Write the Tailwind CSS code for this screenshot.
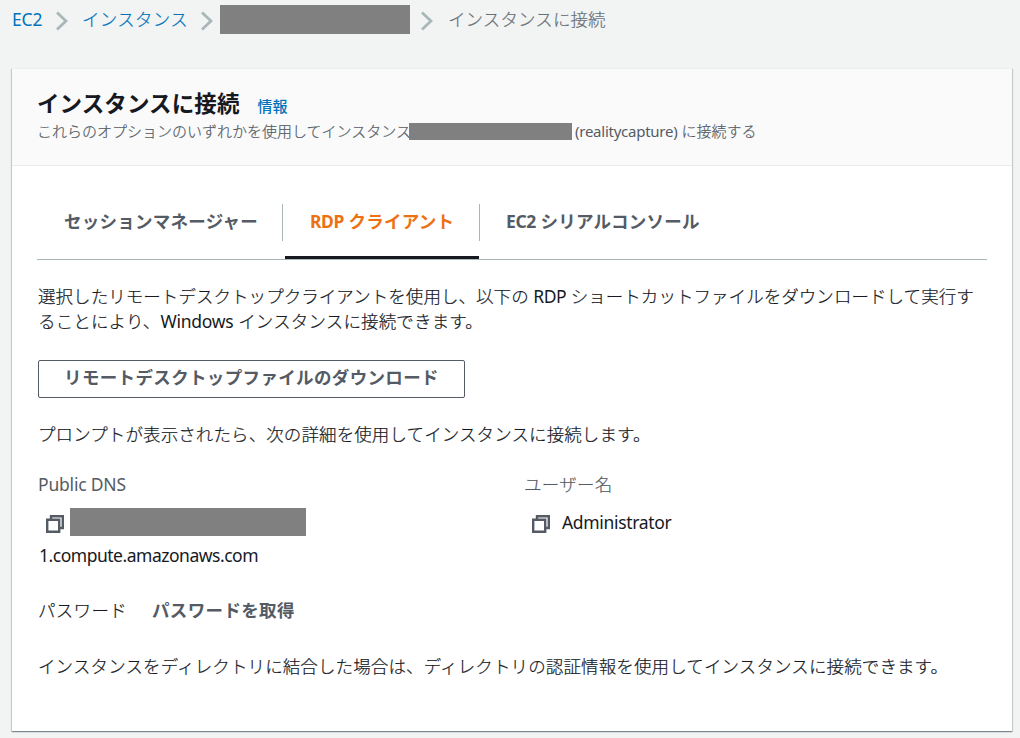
<!DOCTYPE html>
<html lang="ja">
<head>
    <meta charset="UTF-8">
    <meta name="viewport" content="width=device-width, initial-scale=1.0">
    <title>インスタンスに接続 | EC2</title>
    <script src="https://cdn.jsdelivr.net/npm/@tailwindcss/browser@4"></script>
</head>
<body class="bg-[#f2f3f3] h-[738px] overflow-hidden font-['Noto_Sans','Noto_Sans_CJK_JP',sans-serif] text-[17.5px] leading-[25px] text-[#16191f]">
    <!-- Breadcrumbs -->
    <nav class="flex items-center h-[39px] pl-3 whitespace-nowrap">
        <a href="#" class="w-[44px] tracking-[-0.2px] text-[#0073bb]">EC2</a>
        <svg class="w-3 h-5 mt-[3px] mr-[14px]" viewBox="0 0 12 20" fill="none" stroke="#aab7b8" stroke-width="2.8"><path d="M1 1.5l9 8.5-9 8.5"/></svg>
        <a href="#" class="w-[119px] text-[#0073bb] font-light tracking-[0.3px] [-webkit-text-stroke:0.2px]">インスタンス</a>
        <svg class="w-3 h-5 mt-[3px] mr-[7px]" viewBox="0 0 12 20" fill="none" stroke="#aab7b8" stroke-width="2.8"><path d="M1 1.5l9 8.5-9 8.5"/></svg>
        <span class="w-[190px] h-[29px] bg-[#808080] mr-[11px]"></span>
        <svg class="w-3 h-5 mt-[3px] mr-[15px]" viewBox="0 0 12 20" fill="none" stroke="#aab7b8" stroke-width="2.8"><path d="M1 1.5l9 8.5-9 8.5"/></svg>
        <span class="text-[#687078] font-light tracking-[0.1px] [-webkit-text-stroke:0.2px]">インスタンスに接続</span>
    </nav>

    <!-- Connect panel -->
    <main class="mt-[29px] ml-3 w-[1000px] h-[663px] bg-white shadow-[0_1px_1px_0_rgba(0,28,36,0.3),1px_1px_1px_0_rgba(0,28,36,0.15),-1px_1px_1px_0_rgba(0,28,36,0.15)]">
        <header class="h-[98px] bg-[#fafafa] border-t border-b border-[#eaeded] px-[25px] pt-[19px]">
            <div class="flex items-baseline h-[31px] leading-[32px] whitespace-nowrap">
                <h1 class="text-[22.5px] font-bold tracking-[0.1px]">インスタンスに接続</h1>
                <a href="#" class="ml-[18px] text-[15px] font-medium text-[#0073bb]">情報</a>
            </div>
            <p class="flex items-center h-6 pl-px text-[15px] text-[#545b64] whitespace-nowrap">
                <span class="w-[371px] -ml-px mr-px font-light [-webkit-text-stroke:0.2px]">これらのオプションのいずれかを使用してインスタンス</span>
                <span class="w-[163px] h-[17px] bg-[#808080] mr-[3px] z-10"></span>
                <span><span class="tracking-[-0.25px]">(realitycapture)</span> <span class="font-light [-webkit-text-stroke:0.2px]">に接続する</span></span>
            </p>
        </header>

        <div class="pl-[26px] pr-[25px]">
            <!-- Tabs -->
            <div class="flex h-[94px] -ml-px pt-[38px] border-b border-[#aab7b8] font-bold text-[#545b64] whitespace-nowrap">
                <div class="w-[246px] h-[37px] pt-[5px] pl-[27px] border-r border-[#aab7b8] tracking-[0.25px]">セッションマネージャー</div>
                <div class="w-[194px] h-[55px] ml-[2px] pt-[5px] pl-[25px] border-b-3 border-[#16191f] text-[#ec7211]"><span class="tracking-[-0.4px]">RDP</span> <span class="tracking-[0.25px]">クライアント</span></div>
                <div class="h-[37px] pt-[5px] pl-[26px] border-l border-[#aab7b8]"><span class="tracking-[-0.4px]">EC2</span> <span class="tracking-[0.25px]">シリアルコンソール</span></div>
            </div>

            <p class="mt-6 font-light tracking-[0.05px] [-webkit-text-stroke:0.2px] whitespace-nowrap">選択したリモートデスクトップクライアントを使用し、以下の <span class="font-normal tracking-[-0.5px] [-webkit-text-stroke:0]">RDP</span> ショートカットファイルをダウンロードして実行す<br><span class="tracking-[0.15px]">ることにより、<span class="font-normal tracking-[-0.25px] [-webkit-text-stroke:0]">Windows</span> インスタンスに接続できます。</span></p>

            <button class="block mt-[26px] w-[427px] h-[38px] pb-1 border border-[#545b64] rounded-[2px] font-bold tracking-[0.35px] text-[#545b64]">リモートデスクトップファイルのダウンロード</button>

            <p class="mt-6 font-light tracking-[0.1px] [-webkit-text-stroke:0.2px]">プロンプトが表示されたら、次の詳細を使用してインスタンスに接続します。</p>

            <div class="grid grid-cols-[486px_1fr] mt-[25px]">
                <div>
                    <div class="tracking-[-0.2px] text-[#545b64]">Public DNS</div>
                    <div class="flex items-center mt-[11px] h-7 pl-2">
                        <svg class="w-[18px] h-[18px] mt-1 mr-[6px]" viewBox="0 0 18 18" fill="none" stroke="#545b64" stroke-width="2.4"><path d="M1.2 4.8h12v12h-12zM5 4.8V1.2h11.8v11.8h-3.6"/></svg>
                        <span class="w-[236px] h-7 bg-[#808080]"></span>
                    </div>
                    <div class="mt-[7px] pl-px tracking-[-0.48px]">1.compute.amazonaws.com</div>
                </div>
                <div>
                    <div class="font-light tracking-[0.3px] [-webkit-text-stroke:0.2px] text-[#545b64]">ユーザー名</div>
                    <div class="flex items-center mt-[11px] h-7 pl-2">
                        <svg class="w-[18px] h-[18px] mt-1 mr-[12px]" viewBox="0 0 18 18" fill="none" stroke="#545b64" stroke-width="2.4"><path d="M1.2 4.8h12v12h-12zM5 4.8V1.2h11.8v11.8h-3.6"/></svg>
                        <span class="tracking-[-0.33px]">Administrator</span>
                    </div>
                </div>
            </div>

            <div class="flex mt-[30px]">
                <span class="w-[114px] font-light tracking-[0.3px] [-webkit-text-stroke:0.2px]">パスワード</span>
                <a href="#" class="font-bold tracking-[0.35px] text-[#545b64]">パスワードを取得</a>
            </div>

            <p class="mt-[31px] font-light tracking-[0.12px] [-webkit-text-stroke:0.2px] whitespace-nowrap">インスタンスをディレクトリに結合した場合は、ディレクトリの認証情報を使用してインスタンスに接続できます。</p>
        </div>
    </main>
</body>
</html>
